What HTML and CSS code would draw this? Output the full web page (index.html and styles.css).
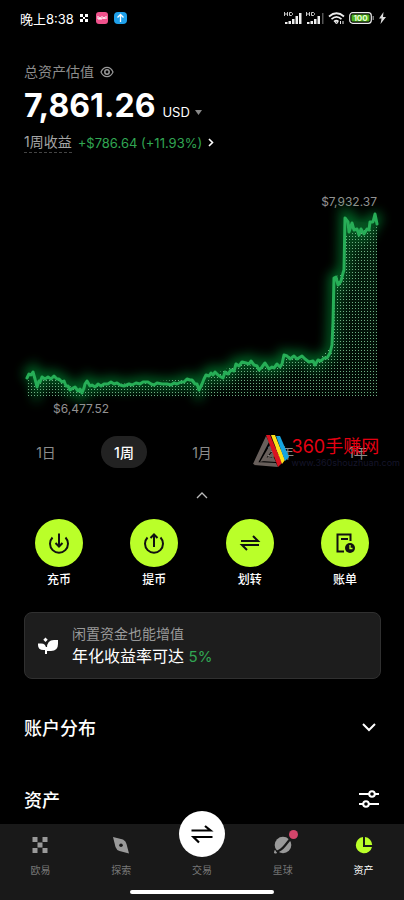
FILE: index.html
```html
<!DOCTYPE html>
<html lang="zh-CN">
<head>
<meta charset="utf-8">
<meta name="viewport" content="width=device-width, initial-scale=1">
<title>资产</title>
<link rel="stylesheet" href="styles.css">
</head>
<body>
<div class="app">
  <header class="status">
    <span class="status-time">晚上8:38</span>
    <svg width="8" height="8" viewBox="0 0 8 8" fill="#fff"><path d="M0 0h3v3H0zM5 0h3v3H5zM3 3h2v2H3zM0 5h3v3H0zM5 5h3v3H5z"/></svg>
    <svg class="app-badge" width="12" height="12" viewBox="0 0 12 12"><rect width="12" height="12" rx="3" fill="#f0528c"/><path d="M2 4v3h2V5v2h2V4M7 7l1-2 1 2M10 4v3" fill="none" stroke="#fff"/></svg>
    <svg width="13" height="12" viewBox="0 0 13 12"><rect width="13" height="12" rx="4" fill="#1fa0ea"/><path d="M6.500 10V3M3.500 5.500l3-3 3 3" fill="none" stroke="#fff" stroke-width="1.300"/></svg>
    <div class="status-right">
      <svg width="18" height="13" viewBox="0 0 18 13"><path d="M.5 0v4M3.500 0v4M.5 2h3M5.500.5h2l1 1v1l-1 1h-2z" fill="none" stroke="#ddd" stroke-width=".9"/><path d="M1 10h2.500v2H1zM4.500 9H7v3H4.500zM8 7h2.500v5H8zM11.500 4H14v8h-2.500zM15 1h2.500v11H15z" fill="#eee"/></svg>
      <svg width="18" height="13" viewBox="0 0 18 13"><path d="M.5 0v4M3.500 0v4M.5 2h3M5.500.5h2l1 1v1l-1 1h-2z" fill="none" stroke="#ddd" stroke-width=".9"/><path d="M1 10h2.500v2H1zM4.500 9H7v3H4.500zM8 7h2.500v5H8zM11.500 4H14v8h-2.500z" fill="#eee"/><path d="M16 1h1.500v11H16z" fill="#555"/></svg>
      <svg width="17" height="13" viewBox="0 0 17 13" fill="none" stroke="#eee" stroke-width="1.700"><path d="M1 4.500q7.500-6.500 15 0M3.500 7.200q5-4.500 10 0M6 9.600q2.500-2 4.500 0"/><path d="M7 10h3l-1.500 2zM12.500 9v3M15 9v3" stroke-width="1"/></svg>
      <svg width="26" height="12" viewBox="0 0 26 12"><rect x=".7" y=".7" width="21.600" height="10.600" rx="3" fill="#000" stroke="#eee" stroke-width="1.200"/><rect x="2.500" y="2.500" width="18" height="7" rx="1" fill="#4caf1e"/><rect x="23.500" y="4" width="1.500" height="4" fill="#777"/><text x="11.500" y="9" text-anchor="middle" class="battery-text">100</text></svg>
      <svg width="7" height="12" viewBox="0 0 7 12"><path d="M4.500 0L0 6.500h2.600L1.500 12 7 5H4z" fill="#ddd"/></svg>
    </div>
  </header>

  <main>
    <section class="summary">
      <div class="summary-label">总资产估值
        <svg width="14" height="12" viewBox="0 0 14 12" fill="none" stroke="#999" stroke-width="1.200"><path d="M1 6Q3 1.300 7 1.300T13 6Q11 10.700 7 10.700T1 6z"/><circle cx="7" cy="6" r="2.200" stroke-width="1.500"/></svg>
      </div>
      <div class="total"><strong>7,861.26</strong><button class="currency">USD <svg width="7" height="5" viewBox="0 0 7 5"><path d="M0 0h7L3.500 5z" fill="#888"/></svg></button></div>
      <a class="gain" href="#gain"><span class="gain-label">1周收益</span><span class="gain-value">+$786.64 (+11.93%)</span><svg width="6" height="9" viewBox="0 0 6 9" fill="none" stroke="#fff" stroke-width="1.600"><path d="M1 1l3.500 3.500L1 8"/></svg></a>
    </section>

    <figure class="chart">
      <span class="chart-high">$7,932.37</span>
      <svg class="chart-plot" viewBox="0 209 404 193">
        <defs>
          <pattern id="dots" x="28" y="209" width="3" height="3" patternUnits="userSpaceOnUse"><rect width="1" height="1" fill="#6fae84"/></pattern>
          <filter id="glow" x="-20%" y="-20%" width="140%" height="140%"><feGaussianBlur stdDeviation="6"/></filter>
          <linearGradient id="shade" x1="0" y1="0" x2="0" y2="1"><stop offset="0" stop-color="#0a4d20" stop-opacity=".5"/><stop offset="1" stop-color="#063015" stop-opacity=".2"/></linearGradient>
          <path id="line" d="M27 378L29 374 31 375 33 372 35 379 37 387 39 381 40 382 42 377 45 379 48 377 51 379 54 376 57 379 59 379 62 382 64 381 66 386 68 386 70 390 73 388 75 387 78 391 80 389 82 393 84 388 85 384 87 381 90 386 92 385 95 387 98 384 101 386 104 384 108 384 111 382 114 384 117 383 120 385 124 386 129 384 132 385 136 383 140 384 143 382 148 382 151 384 154 385 157 383 162 384 167 384 171 385 174 383 177 384 181 382 184 382 187 379 190 380 192 380 195 384 197 384 199 390 202 384 204 379 206 375 209 376 211 373 213 375 215 372 218 375 221 377 223 378 225 372 228 374 231 370 234 371 236 364 239 366 242 362 246 363 249 364 251 361 254 365 257 366 259 370 262 367 265 363 269 369 272 367 274 368 277 364 280 367 282 364 284 355 287 356 290 359 294 356 297 359 302 356 305 359 309 362 313 361 315 365 318 360 321 361 324 358 327 358 330 353 332 345 333 322 334 278 336 277 338 285 341 281 343 273 344 270 345 218 348 222 349 232 352 223 354 230 357 229 359 235 361 229 364 234 367 229 369 230 370 222 373 222 375 214 377 224"/>
        </defs>
        <use href="#line" fill="none" stroke="#00a83c" stroke-width="10" filter="url(#glow)" opacity=".6"/>
        <path fill="url(#shade)" d="M27 378L37 387 42 377 58 379 82 393 90 386 187 379 199 390 213 375 237 364 257 366 281 366 284 355 315 363 332 345 335 278 344 270 345 220 377 224V395H27z"/>
        <path fill="url(#dots)" d="M27 378L37 387 42 377 58 379 82 393 90 386 187 379 199 390 213 375 237 364 257 366 281 366 284 355 315 363 332 345 335 278 344 270 345 235 377 227V396H27z"/>
        <use href="#line" fill="none" stroke="#27ae57" stroke-width="3" stroke-linejoin="round" stroke-linecap="round"/>
      </svg>
      <figcaption class="chart-low">$6,477.52</figcaption>
    </figure>

    <div class="ranges">
      <button>1日</button>
      <button class="selected">1周</button>
      <button>1月</button>
      <button>半年</button>
      <button>1年</button>
      <div class="watermark">
        <svg width="38" height="34" viewBox="0 0 38 34"><path d="M14 2L1 30l4 1L17 8zM18 11L8 28l4-1 9-12zM2 31l24 2-2-4-19-1zM9 27l15 1-2-4-11-1zM21 17l-6 7 6-1 2-2z" fill="#685f5b"/><path d="M14 1h4l12 28-4 4z" fill="#db1220"/><path d="M19 1h4l10 25-3 4z" fill="#ffe019"/><path d="M24 2h4l9 21-4 4z" fill="#16a5df"/></svg>
        <div class="watermark-text"><span>360手赚网</span><small>www.360shouzhuan.com</small></div>
      </div>
    </div>

    <button class="collapse" aria-label="收起"><svg width="12" height="7" viewBox="0 0 12 7" fill="none" stroke="#bbb" stroke-width="1.300"><path d="M1 6l5-5 5 5"/></svg></button>

    <div class="actions">
      <button><span class="disc"><svg width="24" height="24" viewBox="0 0 24 24" fill="none" stroke="#111" stroke-width="2"><path d="M5.500 6.500a9 9 0 1 0 13 0M12 2.500v13M8.500 12l3.500 3.500L15.500 12"/></svg></span>充币</button>
      <button><span class="disc"><svg width="24" height="24" viewBox="0 0 24 24" fill="none" stroke="#111" stroke-width="2"><path d="M5.500 6.500a9 9 0 1 0 13 0M12 16V3.500M8.500 7L12 3.500 15.500 7"/></svg></span>提币</button>
      <button><span class="disc"><svg width="24" height="24" viewBox="0 0 24 24" fill="none" stroke="#111" stroke-width="2"><path d="M3 10h17l-5-5M21 14H4l5 5"/></svg></span>划转</button>
      <button><span class="disc"><svg width="24" height="24" viewBox="0 0 24 24" fill="none" stroke="#111" stroke-width="2"><path d="M17.500 10V3.500h-13v17H11M8 8h7"/><circle cx="17" cy="17" r="5" fill="#111" stroke="none"/><path d="M17 14v3.500h2.500" stroke="#baff29" stroke-width="1.300"/></svg></span>账单</button>
    </div>

    <a class="promo" href="#earn">
      <svg width="20" height="20" viewBox="0 0 20 20" fill="#fff"><path d="M9 12q0-8 7-8h4v4q0 7-7 7H9zM0 7.500h3q5 0 5 5V14H5.500Q0 14 0 9zM7.500 1.500L9.700 3.700 7.500 5.900 5.300 3.700z"/><path d="M7 11h2v7H7z"/></svg>
      <span class="promo-text"><span>闲置资金也能增值</span><span class="promo-rate">年化收益率可达 <b>5%</b></span></span>
    </a>

    <div class="row">
      <h2>账户分布</h2>
      <button aria-label="展开"><svg width="14" height="9" viewBox="0 0 14 9" fill="none" stroke="#fff" stroke-width="2"><path d="M1 1l6 6 6-6"/></svg></button>
    </div>
    <div class="row">
      <h2>资产</h2>
      <button aria-label="筛选"><svg width="20" height="18" viewBox="0 0 20 18" fill="none" stroke="#fff" stroke-width="2"><path d="M0 4h10M16 4h4M0 14h4M10 14h10"/><circle cx="13" cy="4" r="2.800"/><circle cx="7" cy="14" r="2.800"/></svg></button>
    </div>
  </main>

  <nav class="tabbar">
    <div class="tabs">
      <a href="#home"><svg width="24" height="24" viewBox="0 0 24 24" fill="#999"><path d="M4.500 4h5v5h-5zM14.500 4h5v5h-5zM9.500 9.500h5v5h-5zM4.500 15h5v5h-5zM14.500 15h5v5h-5z"/></svg>欧易</a>
      <a href="#explore"><svg width="24" height="24" viewBox="0 0 24 24"><path d="M4 4l10 2.500q3 1.500 3.500 4.500L20 20.500 10.500 18Q7.500 17 6.500 14z" fill="#999"/><circle cx="12" cy="12.300" r="1.800" fill="#191919"/></svg>探索</a>
      <a href="#trade"><span class="trade"><svg width="28" height="28" viewBox="0 0 28 28" fill="none" stroke="#000" stroke-width="2.200"><path d="M3.500 10.500h19L17 6M24.500 17h-19L11 22.500"/></svg></span>交易</a>
      <a href="#planet"><span class="planet"><svg width="24" height="24" viewBox="0 0 24 24"><circle cx="12" cy="12" r="8.300" fill="#999"/><path d="M5 19Q10 17.500 14 12.500T20 5" fill="none" stroke="#191919" stroke-width="2.200"/><path d="M4 17.500l1.500 2.500h-2z" fill="#999" stroke="#999"/></svg><i></i></span>星球</a>
      <a class="current" href="#assets"><svg width="24" height="24" viewBox="0 0 24 24" fill="#baff29"><path d="M11 4a8.200 8.200 0 1 0 9 10h-9zM13 4v8h7.200A8.200 8.200 0 0 0 13 4z"/></svg>资产</a>
    </div>
    <div class="home-bar"></div>
  </nav>
</div>
</body>
</html>
```

FILE: styles.css
```css
* {
  box-sizing: border-box;
}

body {
  margin: 0;
  background: #000;
  color: #fff;
  font-family: Inter, "Noto Sans CJK SC", sans-serif;
  font-size: 13px;
}

button {
  padding: 0;
  border: 0;
  background: none;
  color: inherit;
  font: inherit;
  cursor: pointer;
}

a {
  color: inherit;
  text-decoration: none;
}

svg {
  display: block;
  flex: none;
}

.app {
  display: flex;
  flex-direction: column;
  min-height: 100vh;
}

.status {
  display: flex;
  align-items: center;
  height: 36px;
  padding: 0 18px 0 20px;
}

.status-time {
  margin-right: 6px;
  font-size: 13px;
}

.app-badge {
  margin: 0 6px 0 8px;
}

.status-right {
  display: flex;
  align-items: center;
  gap: 4px;
  margin-left: auto;
}

.battery-text {
  fill: #eaffd8;
  font-size: 8px;
  font-weight: 700;
}

.summary {
  padding: 26px 24px 0;
}

.summary-label {
  display: flex;
  align-items: center;
  gap: 6px;
  color: #8c8c8c;
  font-size: 14px;
  line-height: 20px;
}

.total {
  display: flex;
  align-items: baseline;
  gap: 7px;
  height: 50px;
  line-height: 48px;
}

.total strong {
  font-size: 32px;
}

.currency {
  display: flex;
  align-items: center;
  gap: 5px;
  font-size: 13px;
}

.gain {
  display: flex;
  align-items: center;
  gap: 6px;
  line-height: 20px;
}

.gain-label {
  border-bottom: 1px dashed #444;
  color: #a5a5a5;
  font-size: 14px;
}

.gain-value {
  color: #31a653;
}

.chart {
  display: flex;
  flex-direction: column;
  margin: 42px 0 0;
  color: #929292;
  font-size: 12px;
  line-height: 14px;
}

.chart-high {
  padding-right: 27px;
  text-align: right;
}

.chart-plot {
  width: 100%;
  overflow: visible;
}

.chart-low {
  padding-left: 53px;
}

.ranges {
  position: relative;
  display: flex;
  justify-content: space-between;
  margin-top: 20px;
  padding: 0 23px;
}

.ranges button {
  width: 46px;
  height: 32px;
  border-radius: 16px;
  color: #8c8c8c;
  font-size: 14px;
}

.ranges .selected {
  background: #222;
  color: #fff;
  font-weight: 500;
}

.watermark {
  position: absolute;
  top: -2px;
  right: 4px;
  display: flex;
  gap: 2px;
  pointer-events: none;
}

.watermark-text {
  display: flex;
  flex-direction: column;
  color: #e60012;
  font-size: 18px;
  line-height: 26px;
}

.watermark small {
  color: #15152a;
  font-size: 9px;
  line-height: 6px;
}

.collapse {
  display: flex;
  justify-content: center;
  width: 100%;
  margin-top: 24px;
}

.actions {
  display: flex;
  justify-content: space-between;
  margin-top: 20px;
  padding: 0 35px;
}

.actions button {
  width: 48px;
  font-size: 12px;
  font-weight: 500;
  line-height: 18px;
}

.disc {
  display: flex;
  align-items: center;
  justify-content: center;
  height: 48px;
  margin-bottom: 4px;
  border-radius: 50%;
  background: #baff29;
}

.promo {
  display: flex;
  align-items: center;
  gap: 14px;
  margin: 23px 23px 0 24px;
  padding: 10px 13px;
  border: 1px solid #303030;
  border-radius: 8px;
  background: #1d1d1d;
}

.promo-text {
  display: flex;
  flex-direction: column;
  color: #999;
  font-size: 14px;
  line-height: 22px;
}

.promo-rate {
  color: #fff;
  font-size: 16px;
}

.promo-rate b {
  color: #31a653;
  font-size: 15px;
  font-weight: 400;
}

.row {
  display: flex;
  align-items: center;
  justify-content: space-between;
  height: 24px;
  margin-top: 48px;
  padding: 0 25px 0 24px;
}

.promo + .row {
  margin-top: 36px;
}

.row h2 {
  margin: 0;
  font-size: 18px;
  font-weight: 500;
}

.row button {
  display: flex;
  justify-content: center;
  width: 20px;
}

.tabbar {
  margin-top: auto;
  padding-bottom: 6px;
  background: #191919;
}

.tabs {
  display: grid;
  grid-template-columns: repeat(5, 1fr);
  grid-template-rows: 66px;
}

.tabs a {
  display: flex;
  flex-direction: column;
  align-items: center;
  justify-content: flex-end;
  gap: 5px;
  padding-bottom: 12px;
  color: #777;
  font-size: 10px;
  line-height: 16px;
}

.tabs .current {
  color: #fff;
}

.trade {
  display: flex;
  align-items: center;
  justify-content: center;
  flex: none;
  width: 46px;
  height: 46px;
  border-radius: 50%;
  background: #fff;
}

.planet {
  position: relative;
}

.planet i {
  position: absolute;
  top: -3px;
  right: -3px;
  width: 9px;
  height: 9px;
  border-radius: 50%;
  background: #d3456b;
}

.home-bar {
  width: 144px;
  height: 4px;
  margin: 0 auto;
  border-radius: 2px;
  background: #fff;
}
```
